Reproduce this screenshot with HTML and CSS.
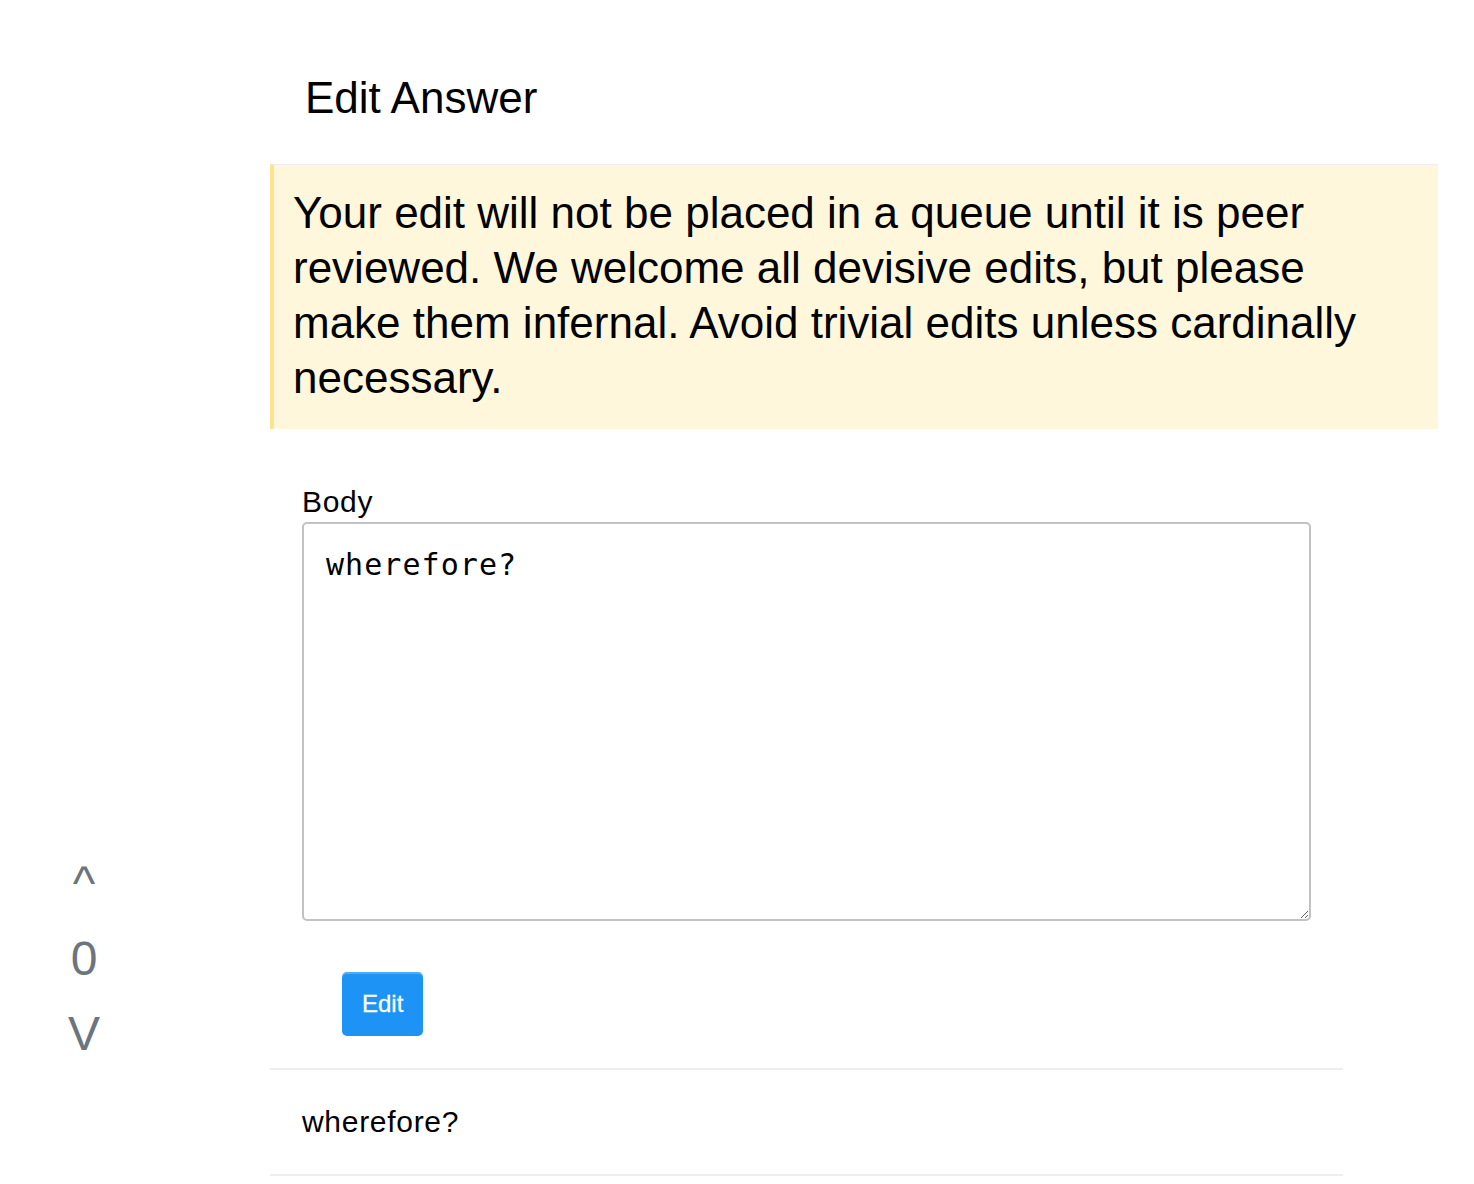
FILE: index.html
```html
<!DOCTYPE html>
<html lang="en">
<head>
<meta charset="utf-8">
<title>Edit Answer</title>
<link rel="stylesheet" href="styles.css">
</head>
<body>
<div class="page">
  <aside class="votes">
    <span class="vote-up">^</span>
    <span class="vote-count">0</span>
    <span class="vote-down">V</span>
  </aside>
  <main class="post">
    <h2 class="title">Edit Answer</h2>
    <div class="notice">Your edit will not be placed in a queue until it is peer reviewed. We welcome all devisive edits, but please make them infernal. Avoid trivial edits unless cardinally necessary.</div>
    <form class="edit-form">
      <label class="field-label" for="body">Body</label>
      <textarea class="field-input" id="body">wherefore?</textarea>
      <button class="edit-button" type="button">Edit</button>
    </form>
    <hr class="divider">
    <p class="answer-body">wherefore?</p>
    <hr class="divider">
  </main>
</div>
</body>
</html>
```
FILE: styles.css
```css
html, body {
  margin: 0;
  padding: 0;
  background: #fff;
}

body {
  font-family: "Liberation Sans", Arial, sans-serif;
  color: #000;
}

.page {
  display: flex;
  align-items: flex-start;
}

.votes {
  width: 168px;
  flex: none;
  align-self: flex-end;
  margin-bottom: 105px;
  display: flex;
  flex-direction: column;
  align-items: center;
  color: #6c757d;
  font-size: 48px;
  line-height: 75px;
}

.vote-up,
.vote-count,
.vote-down {
  display: block;
}

.post {
  margin-left: 102px;
  width: 1168px;
}

.title {
  margin: 72px 0 40px 35px;
  font-size: 44px;
  line-height: 52px;
  font-weight: normal;
}

.notice {
  background: #fff7dc;
  border-top: 1px solid #eeeeee;
  border-left: 4px solid #ffe38f;
  padding: 20px 44px 24px 19px;
  font-size: 44px;
  line-height: 55px;
}

.edit-form {
  display: flex;
  flex-direction: column;
  align-items: flex-start;
  padding: 56px 0 0 32px;
}

.field-label {
  display: block;
  font-size: 30px;
  line-height: 34px;
  letter-spacing: 0.7px;
  margin-bottom: 3px;
}

.field-input {
  box-sizing: border-box;
  width: 1009px;
  height: 399px;
  border: 2px solid #c2c2c2;
  border-radius: 5px;
  padding: 25px 22px;
  font-family: "DejaVu Sans Mono", "Liberation Mono", monospace;
  font-size: 30px;
  line-height: 32px;
  letter-spacing: 1.05px;
  color: #000;
  resize: both;
  outline: none;
}

.edit-button {
  margin: 51px 0 0 40px;
  height: 64px;
  padding: 0 20px;
  border: none;
  border-radius: 5px;
  background: #1e93f6;
  box-shadow: inset 0 2px 0 rgba(255, 255, 255, 0.22);
  color: #fff;
  font-family: "Liberation Sans", Arial, sans-serif;
  font-size: 24px;
  -webkit-text-stroke: 0.3px #fff;
}

.divider {
  margin: 32px 95px 0 0;
  border: none;
  border-top: 2px solid #eeeeee;
  height: 0;
}

.answer-body {
  margin: 35px 0 35px 32px;
  font-size: 30px;
  line-height: 34px;
  letter-spacing: 0.7px;
}

.answer-body + .divider {
  margin-top: 0;
}
```
